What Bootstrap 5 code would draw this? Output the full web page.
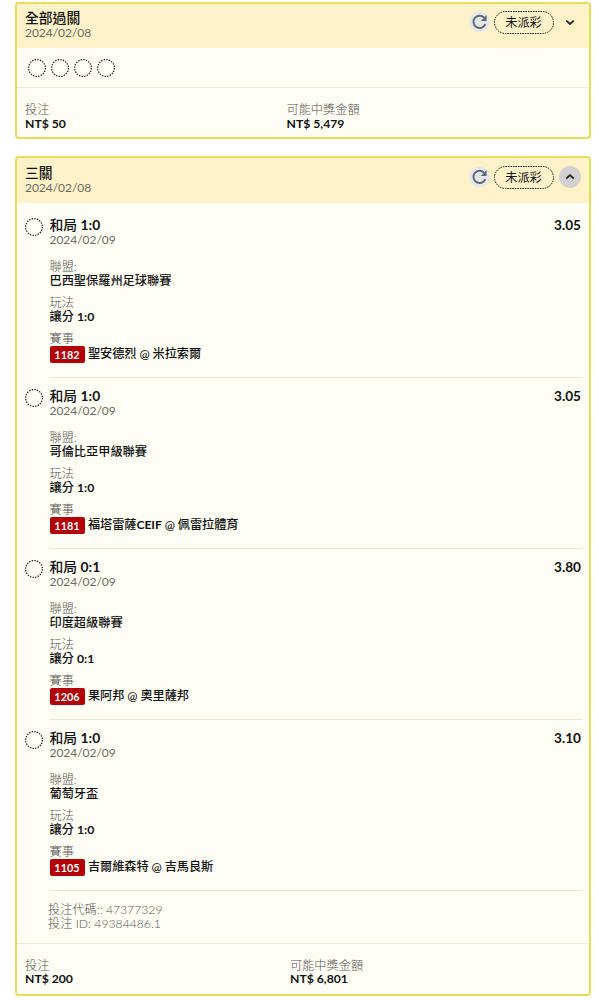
<!DOCTYPE html>
<html lang="zh-Hant">
<head>
<meta charset="utf-8">
<meta name="viewport" content="width=device-width, initial-scale=1">
<title>投注紀錄</title>
<link href="https://cdn.jsdelivr.net/npm/bootstrap@5.3.0/dist/css/bootstrap.min.css" rel="stylesheet">
<style>
body{font-family:Lato,"Noto Sans CJK TC",sans-serif;font-size:12.2px;line-height:14px;color:#111;background:#fff}
.slips{padding:2px 8px 0 15px}
.slip{border:2px solid #e8dc5a;border-radius:4px;background:#fffef5;color:#111;overflow:hidden}
.slip-head{background:#fff2c9;height:45px;padding:7px 8px 0}
.slip-title{font-size:13.8px;line-height:16px;font-weight:500}
.latin-b{font-weight:700}
.muted-text{color:#55534e;font-weight:300}
.date-text{color:#6b6963;font-weight:400;font-size:12px;letter-spacing:-.03px}
.strong-text{font-weight:500}
.ring{width:18px;height:18px;flex:none;display:block}
.tools{gap:4px;margin-top:1px}
.icon-dot{width:22px;height:22px;flex:none}
.pill{width:60px;height:23px;position:relative;font-size:12.2px;line-height:24px;text-align:center;font-weight:400;padding-right:1px;margin-left:-1px;margin-right:1px}
.pill svg{position:absolute;inset:0}
.rings{height:39px;padding:11px 11px;gap:5px;border-bottom:1px solid #ece9df}
.legs{padding:4px 7px 0 8px}
.leg{gap:6.5px;height:171px}
.leg .ring{margin-top:11px}
.leg-body{border-bottom:1px solid #ebe6dc;padding-top:10px}
.odds{font-size:13.6px;line-height:16px;font-weight:700;padding-right:1px}
.first-block{margin-top:13px}
.gap-block{margin-top:8px}
.gap-block + .gap-block{margin-top:7.5px}
.code{background:#b30006;color:#fff;font-weight:700;font-size:10.9px;line-height:17px;width:35px;border-radius:2px;text-align:center;margin-right:3.5px}
.match{letter-spacing:-.08px}
.ids{padding:12px 0 0 31px;height:52px}
.ids div{font-size:12.2px;line-height:13.5px}
.totals{padding:0 8px}
</style>
</head>
<body>
<svg width="0" height="0" class="position-absolute" aria-hidden="true">
  <symbol id="ring" viewBox="0 0 18 18"><circle cx="9" cy="9" r="8.4" fill="none" stroke="#111" stroke-width="1.15" stroke-dasharray="1.4 1.24"/></symbol>
  <symbol id="pill" viewBox="0 0 60 23"><rect x=".5" y=".5" width="59" height="22" rx="11" fill="none" stroke="#111" stroke-width="1" stroke-dasharray="1.5 1"/></symbol>
  <symbol id="reload" viewBox="0 0 22 22"><circle cx="10.5" cy="11" r="10.5" fill="#e6e7e8"/><path d="M16.4 13.2A6.2 6.2 0 1 1 15.2 6.6" fill="none" stroke="#626b74" stroke-width="2"/><path d="M17.6 4V10h-6z" fill="#626b74"/></symbol>
  <symbol id="down" viewBox="0 0 22 22"><path d="M7.3 9.7 11 13l3.7-3.3" fill="none" stroke="#222" stroke-width="1.8"/></symbol>
  <symbol id="up" viewBox="0 0 22 22"><circle cx="11" cy="11" r="11" fill="#d3d1d0"/><path d="M7.3 12.5 11 9.2l3.7 3.3" fill="none" stroke="#222" stroke-width="1.8"/></symbol>
</svg>
<main class="slips">
  <section class="slip">
    <header class="slip-head d-flex justify-content-between" style="height:44px;padding-top:6px">
      <div><div class="slip-title">全部過關</div><div class="date-text">2024/02/08</div></div>
      <div class="tools d-flex align-items-start"><svg class="icon-dot"><use href="#reload"/></svg><div class="pill"><svg width="60" height="23"><use href="#pill"/></svg>未派彩</div><svg class="icon-dot"><use href="#down"/></svg></div>
    </header>
    <div class="rings d-flex" style="height:40px">
      <svg class="ring"><use href="#ring"/></svg><svg class="ring"><use href="#ring"/></svg><svg class="ring"><use href="#ring"/></svg><svg class="ring"><use href="#ring"/></svg>
    </div>
    <footer class="totals d-flex" style="height:49px;padding-top:15px">
      <div style="width:261.5px"><div class="muted-text">投注</div><div class="latin-b">NT$ 50</div></div>
      <div><div class="muted-text">可能中獎金額</div><div class="latin-b">NT$ 5,479</div></div>
    </footer>
  </section>

  <section class="slip" style="margin-top:17px">
    <header class="slip-head d-flex justify-content-between">
      <div><div class="slip-title">三關</div><div class="date-text">2024/02/08</div></div>
      <div class="tools d-flex align-items-start"><svg class="icon-dot"><use href="#reload"/></svg><div class="pill"><svg width="60" height="23"><use href="#pill"/></svg>未派彩</div><svg class="icon-dot"><use href="#up"/></svg></div>
    </header>
    <div class="legs">
      <article class="leg d-flex">
        <svg class="ring"><use href="#ring"/></svg>
        <div class="leg-body flex-grow-1">
          <div class="d-flex justify-content-between"><div class="slip-title">和局 <span class="latin-b">1:0</span></div><div class="odds">3.05</div></div>
          <div class="date-text">2024/02/09</div>
          <div class="first-block"><div class="muted-text">聯盟:</div><div class="strong-text">巴西聖保羅州足球聯賽</div></div>
          <div class="gap-block"><div class="muted-text">玩法</div><div class="strong-text">讓分 <span class="latin-b">1:0</span></div></div>
          <div class="gap-block"><div class="muted-text">賽事</div><div class="d-flex align-items-center strong-text"><span class="code">1182</span><span class="match">聖安德烈 @ 米拉索爾</span></div></div>
        </div>
      </article>
      <article class="leg d-flex">
        <svg class="ring"><use href="#ring"/></svg>
        <div class="leg-body flex-grow-1">
          <div class="d-flex justify-content-between"><div class="slip-title">和局 <span class="latin-b">1:0</span></div><div class="odds">3.05</div></div>
          <div class="date-text">2024/02/09</div>
          <div class="first-block"><div class="muted-text">聯盟:</div><div class="strong-text">哥倫比亞甲級聯賽</div></div>
          <div class="gap-block"><div class="muted-text">玩法</div><div class="strong-text">讓分 <span class="latin-b">1:0</span></div></div>
          <div class="gap-block"><div class="muted-text">賽事</div><div class="d-flex align-items-center strong-text"><span class="code">1181</span><span class="match">福塔雷薩<span class="latin-b">CEIF</span> @ 佩雷拉體育</span></div></div>
        </div>
      </article>
      <article class="leg d-flex">
        <svg class="ring"><use href="#ring"/></svg>
        <div class="leg-body flex-grow-1">
          <div class="d-flex justify-content-between"><div class="slip-title">和局 <span class="latin-b">0:1</span></div><div class="odds">3.80</div></div>
          <div class="date-text">2024/02/09</div>
          <div class="first-block"><div class="muted-text">聯盟:</div><div class="strong-text">印度超級聯賽</div></div>
          <div class="gap-block"><div class="muted-text">玩法</div><div class="strong-text">讓分 <span class="latin-b">0:1</span></div></div>
          <div class="gap-block"><div class="muted-text">賽事</div><div class="d-flex align-items-center strong-text"><span class="code">1206</span><span class="match">果阿邦 @ 奧里薩邦</span></div></div>
        </div>
      </article>
      <article class="leg d-flex">
        <svg class="ring"><use href="#ring"/></svg>
        <div class="leg-body flex-grow-1">
          <div class="d-flex justify-content-between"><div class="slip-title">和局 <span class="latin-b">1:0</span></div><div class="odds">3.10</div></div>
          <div class="date-text">2024/02/09</div>
          <div class="first-block"><div class="muted-text">聯盟:</div><div class="strong-text">葡萄牙盃</div></div>
          <div class="gap-block"><div class="muted-text">玩法</div><div class="strong-text">讓分 <span class="latin-b">1:0</span></div></div>
          <div class="gap-block"><div class="muted-text">賽事</div><div class="d-flex align-items-center strong-text"><span class="code">1105</span><span class="match">吉爾維森特 @ 吉馬良斯</span></div></div>
        </div>
      </article>
    </div>
    <div class="ids muted-text"><div>投注代碼:: 47377329</div><div>投注 ID: 49384486.1</div></div>
    <footer class="totals d-flex border-top" style="height:51px;padding-top:15px;border-color:#ece9df!important">
      <div style="width:265px"><div class="muted-text">投注</div><div class="latin-b" style="margin-top:-1px">NT$ 200</div></div>
      <div><div class="muted-text">可能中獎金額</div><div class="latin-b" style="margin-top:-1px">NT$ 6,801</div></div>
    </footer>
  </section>
</main>
<script src="https://cdn.jsdelivr.net/npm/bootstrap@5.3.0/dist/js/bootstrap.bundle.min.js"></script>
</body>
</html>
